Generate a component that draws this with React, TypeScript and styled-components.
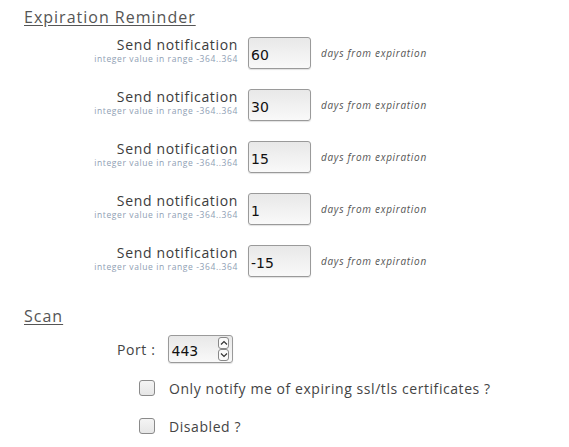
import React from "react"
import styled, { createGlobalStyle } from "styled-components"

const GlobalStyle = createGlobalStyle`
	body {
		margin: 0;
		background: #ffffff;
		font-family: "Open Sans", "DejaVu Sans", sans-serif;
		color: #444;
	}
`

const reminders = ["60", "30", "15", "1", "-15"]

export default function App() {
	return (
		<>
			<GlobalStyle />
			<Page>
				<SectionTitle>Expiration Reminder</SectionTitle>
				<ReminderList>
					{reminders.map((value, index) => (
						<ReminderRow key={index}>
							<LabelBlock>
								<LabelText>Send notification</LabelText>
								<HelpText>integer value in range -364..364</HelpText>
							</LabelBlock>
							<DayInput defaultValue={value} />
							<Note>days from expiration</Note>
						</ReminderRow>
					))}
				</ReminderList>

				<SectionTitle $spaced>Scan</SectionTitle>
				<PortRow>
					<PortLabel>Port :</PortLabel>
					<PortBox>
						<PortValue>443</PortValue>
						<Spinner>
							<SpinButton>
								<svg width="8" height="6" viewBox="0 0 8 6">
									<path d="M1 4.5 L4 1.5 L7 4.5" fill="none" stroke="#333" strokeWidth="1.2" />
								</svg>
							</SpinButton>
							<SpinButton>
								<svg width="8" height="6" viewBox="0 0 8 6">
									<path d="M1 1.5 L4 4.5 L7 1.5" fill="none" stroke="#333" strokeWidth="1.2" />
								</svg>
							</SpinButton>
						</Spinner>
					</PortBox>
				</PortRow>
				<CheckList>
					<CheckRow>
						<CheckBox />
						<CheckLabel>Only notify me of expiring ssl/tls certificates ?</CheckLabel>
					</CheckRow>
					<CheckRow>
						<CheckBox />
						<CheckLabel>Disabled ?</CheckLabel>
					</CheckRow>
				</CheckList>
			</Page>
		</>
	)
}

const Page = styled.div`
	padding: 7px 0 0 24px;
	width: 545px;
`

const SectionTitle = styled.h2<{ $spaced?: boolean }>`
	margin: ${(p) => (p.$spaced ? "29px" : "0")} 0 0 0;
	font-size: 16px;
	font-weight: 500;
	color: #555;
	text-decoration: underline;
	text-underline-offset: 2px;
	letter-spacing: 1px;
	line-height: 20px;
`

const ReminderList = styled.div`
	display: flex;
	flex-direction: column;
	gap: 20px;
	margin-top: 10px;
`

const ReminderRow = styled.div`
	display: flex;
	align-items: center;
	gap: 10px;
`

const LabelBlock = styled.div`
	width: 214px;
	display: flex;
	flex-direction: column;
	align-items: flex-end;
	margin-top: -6px;
`

const LabelText = styled.span`
	font-size: 14px;
	line-height: 17px;
	color: #3c3c3c;
	letter-spacing: 0.65px;
`

const HelpText = styled.span`
	font-size: 8.5px;
	line-height: 11px;
	color: #8fa0b4;
	letter-spacing: 0.6px;
`

const DayInput = styled.input`
	box-sizing: border-box;
	width: 63px;
	height: 32px;
	padding: 3px 3px 0 2px;
	border: 1px solid #9a9a9a;
	border-radius: 3px;
	background: linear-gradient(#e8e8e8, #f9f9f9);
	box-shadow: 0 1px 1px rgba(0, 0, 0, 0.12);
	font-family: "DejaVu Sans", sans-serif;
	font-size: 14px;
	color: #111;
	outline: none;
`

const Note = styled.span`
	font-size: 10px;
	font-style: italic;
	color: #555;
	letter-spacing: 0.7px;
`

const PortRow = styled.div`
	display: flex;
	align-items: center;
	gap: 13px;
	margin-top: 9px;
	padding-left: 93px;
`

const PortLabel = styled.span`
	font-size: 14px;
	color: #444;
	letter-spacing: 0.6px;
`

const PortBox = styled.div`
	box-sizing: border-box;
	width: 65px;
	height: 28px;
	display: flex;
	align-items: center;
	justify-content: space-between;
	padding: 0 3px 0 2px;
	border: 1px solid #9a9a9a;
	border-radius: 3px;
	background: linear-gradient(#e8e8e8, #f9f9f9);
	box-shadow: 0 1px 1px rgba(0, 0, 0, 0.12);
`

const PortValue = styled.span`
	font-family: "DejaVu Sans", sans-serif;
	font-size: 14px;
	color: #111;
	padding-top: 3px;
`

const Spinner = styled.div`
	display: flex;
	flex-direction: column;
`

const SpinButton = styled.div`
	box-sizing: border-box;
	width: 11px;
	height: 12px;
	display: flex;
	align-items: center;
	justify-content: center;
	border: 1px solid #888;
	border-radius: 3px;
	background: #fafafa;
`

const CheckList = styled.div`
	display: flex;
	flex-direction: column;
	gap: 20px;
	margin-top: 16px;
	padding-left: 115px;
`

const CheckRow = styled.div`
	display: flex;
	align-items: center;
	gap: 14px;
	height: 18px;
`

const CheckBox = styled.span`
	box-sizing: border-box;
	width: 16px;
	height: 16px;
	border: 1px solid #8a8a8a;
	border-radius: 3px;
	background: linear-gradient(#f4f4f4, #e6e6e6);
`

const CheckLabel = styled.span`
	font-size: 14px;
	color: #444;
	letter-spacing: 0.57px;
`
